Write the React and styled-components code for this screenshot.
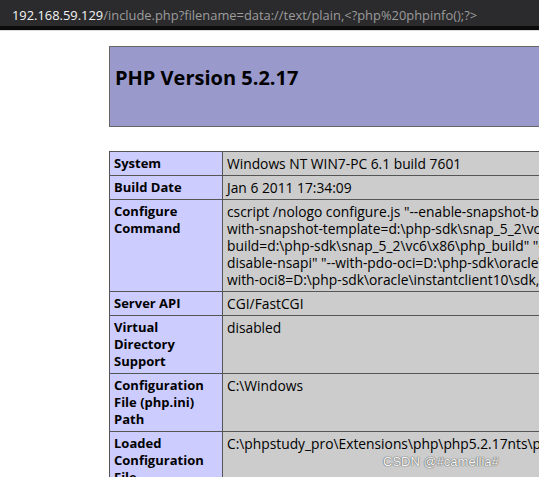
import React from "react";
import styled, { createGlobalStyle } from "styled-components";

const GlobalStyle = createGlobalStyle`
  html, body {
    margin: 0;
    padding: 0;
    background: #ffffff;
    overflow: hidden;
  }
  body {
    font-family: "Open Sans", "Noto Sans", "DejaVu Sans", sans-serif;
  }
`;

const Screen = styled.div`
  position: relative;
  width: 539px;
  height: 477px;
  overflow: hidden;
  background: #ffffff;
`;

const AddressBar = styled.div`
  height: 30px;
  box-sizing: border-box;
  padding: 4px 0 0 12px;
  background: #2b2b2d;
  border-bottom: 4px solid #0b0b0b;
  box-shadow: 0 1px 0 #dcdcdc;
  display: flex;
  align-items: center;
  font-family: "Open Sans", "Noto Sans", sans-serif;
  font-size: 12.9px;
  white-space: nowrap;
  overflow: hidden;
`;

const Host = styled.span`
  color: #f4f4f4;
`;

const Path = styled.span`
  color: #9c9c9c;
`;

const Page = styled.div`
  padding: 16px 0 0 109px;
`;

const HeaderBox = styled.div`
  width: 600px;
  height: 81px;
  box-sizing: border-box;
  border: 1px solid #666666;
  background: #9999cc;
  padding: 18px 0 0 5px;
`;

const Title = styled.h1`
  margin: 0;
  font-family: "Open Sans", "Noto Sans", sans-serif;
  font-size: 20px;
  font-weight: 700;
  color: #000000;
  line-height: 26px;
`;

const InfoTable = styled.table`
  margin-top: 24px;
  width: 600px;
  table-layout: fixed;
  border-collapse: collapse;
  font-family: "Open Sans", "Noto Sans", sans-serif;
  line-height: 17px;
  color: #000000;
`;

const KeyCol = styled.col`
  width: 113px;
`;

const Cell = styled.td`
  border: 1px solid #555555;
  padding: 3px 4px;
  vertical-align: top;
  white-space: nowrap;
  overflow: hidden;
  background: ${(p) => (p.$key ? "#ccccff" : "#cccccc")};
  font-weight: ${(p) => (p.$key ? 700 : 400)};
  font-size: ${(p) => (p.$key ? "13px" : "13.8px")};
`;

const Watermark = styled.div`
  position: absolute;
  left: 383px;
  top: 454px;
  font-family: "Liberation Sans", Arial, sans-serif;
  font-size: 13px;
  color: rgba(255, 255, 255, 0.95);
  text-shadow: 0 0 1px #6e6e6e, 0 0 1px #6e6e6e, 0 0 1px #6e6e6e;
  white-space: nowrap;
`;

const rows = [
  { k: ["System"], v: ["Windows NT WIN7-PC 6.1 build 7601"] },
  { k: ["Build Date"], v: ["Jan 6 2011 17:34:09"] },
  {
    k: ["Configure", "Command"],
    v: [
      'cscript /nologo configure.js "--enable-snapshot-build"',
      'with-snapshot-template=d:\\php-sdk\\snap_5_2\\vc6\\x86',
      'build=d:\\php-sdk\\snap_5_2\\vc6\\x86\\php_build" "--',
      'disable-nsapi" "--with-pdo-oci=D:\\php-sdk\\oracle\\',
      'with-oci8=D:\\php-sdk\\oracle\\instantclient10\\sdk,shared"',
    ],
  },
  { k: ["Server API"], v: ["CGI/FastCGI"] },
  { k: ["Virtual", "Directory", "Support"], v: ["disabled"] },
  { k: ["Configuration", "File (php.ini)", "Path"], v: ["C:\\Windows"] },
  {
    k: ["Loaded", "Configuration", "File"],
    v: ["C:\\phpstudy_pro\\Extensions\\php\\php5.2.17nts\\php.ini"],
  },
];

const Lines = ({ items }) =>
  items.map((t, i) => (
    <React.Fragment key={i}>
      {i > 0 && <br />}
      {t}
    </React.Fragment>
  ));

export default function App() {
  return (
    <Screen>
      <GlobalStyle />
      <AddressBar>
        <Host>192.168.59.129</Host>
        <Path>/include.php?filename=data://text/plain,&lt;?php%20phpinfo();?&gt;</Path>
      </AddressBar>
      <Page>
        <HeaderBox>
          <Title>PHP Version 5.2.17</Title>
        </HeaderBox>
        <InfoTable>
          <colgroup>
            <KeyCol />
            <col />
          </colgroup>
          <tbody>
            {rows.map((r, i) => (
              <tr key={i}>
                <Cell $key>
                  <Lines items={r.k} />
                </Cell>
                <Cell>
                  <Lines items={r.v} />
                </Cell>
              </tr>
            ))}
          </tbody>
        </InfoTable>
      </Page>
      <Watermark>CSDN @#camellia#</Watermark>
    </Screen>
  );
}
